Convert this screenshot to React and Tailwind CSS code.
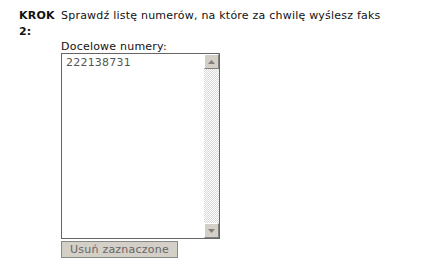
import React from "react";

const numbers = ["222138731"];

const ScrollButton = ({ up }) => (
  <div className="w-[15px] h-[15px] bg-[#d4d0c8] border border-t-white border-l-white border-r-[#808080] border-b-[#808080] flex items-center justify-center">
    <svg width="7" height="4" viewBox="0 0 7 4">
      {up ? (
        <polygon points="3.5,0 7,4 0,4" fill="#808080" />
      ) : (
        <polygon points="0,0 7,0 3.5,4" fill="#808080" />
      )}
    </svg>
  </div>
);

const App = () => {
  return (
    <div className="w-[428px] h-[273px] bg-white text-[11px] tracking-[0.22px] text-[#111] font-['DejaVu_Sans',Verdana,sans-serif]">
      <div className="flex pt-[8px] pl-[19px]">
        <div className="w-[42px] font-bold leading-[16px] pr-[4px]">KROK 2:</div>
        <div className="flex flex-col">
          <p className="leading-[15px] mb-[17px]">
            Sprawdź listę numerów, na które za chwilę wyślesz faks
          </p>
          <label className="leading-[13px]">Docelowe numery:</label>
          <div className="flex w-[159px] h-[186px] border border-[#666]">
            <div className="flex-1 pl-[4px] pt-[2px] text-[#555] leading-[14px]">
              {numbers.map((n) => (
                <div key={n}>{n}</div>
              ))}
            </div>
            <div className="w-[15px] flex flex-col justify-between bg-[repeating-conic-gradient(#d8d8d8_0_25%,#ffffff_0_50%)] bg-[length:2px_2px]">
              <ScrollButton up />
              <ScrollButton />
            </div>
          </div>
          <button className="mt-[2px] w-[117px] h-[17px] bg-[#d4d0c8] border border-[#888] text-[#666] text-[11px] tracking-[0.22px] leading-[15px] font-['DejaVu_Sans',Verdana,sans-serif]">
            Usuń zaznaczone
          </button>
        </div>
      </div>
    </div>
  );
};

export default App;
